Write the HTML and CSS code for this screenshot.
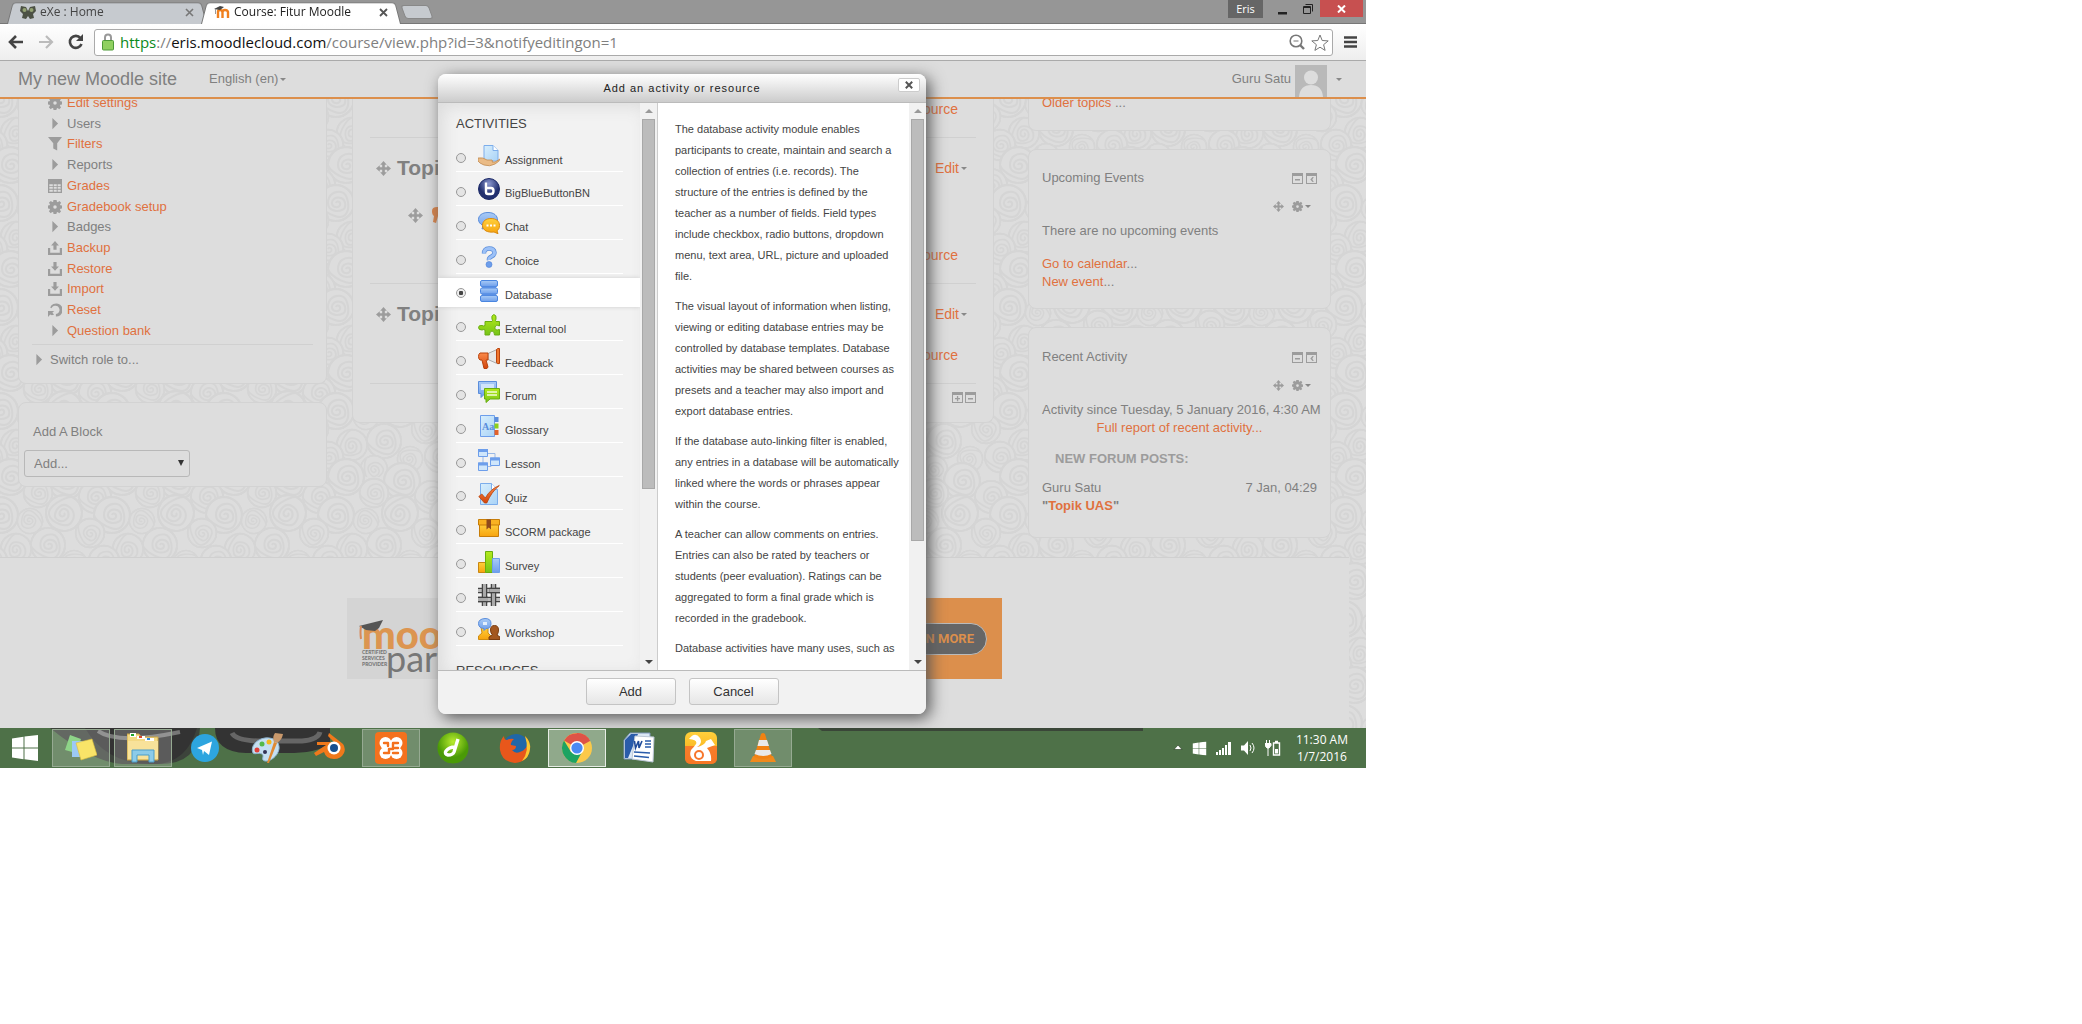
FILE: index.html
```html
<!DOCTYPE html>
<html lang="en">
<head>
<meta charset="utf-8">
<title>Course: Fitur Moodle</title>
<link rel="stylesheet" href="styles.css">
</head>
<body>
<svg class="defs" width="0" height="0" aria-hidden="true">
  <defs>
    <symbol id="i-move" viewBox="0 0 16 16"><path d="M8 0l3.500 4H9.400v2.600H12V4.500L16 8l-4 3.500V9.400H9.400V12h2.100L8 16l-3.500-4h2.100V9.400H4v2.100L0 8l4-3.500v2.100h2.600V4H4.500z"/></symbol>
    <symbol id="i-gear" viewBox="0 0 16 16"><path fill-rule="evenodd" d="M6.200 0h3.600l.4 2.100 1 .4L13 1.100 15 3.200l-1.300 1.800.4 1.100 1.900.3v3.300l-1.900.3-.5 1.100L14.900 13l-2.100 2-1.700-1.300-1.100.5-.4 1.800H6.300l-.3-1.900-1.200-.5L3.100 15 1 12.900l1.300-1.700-.5-1.200-1.800-.4V6.400l1.800-.3.500-1.200L1 3.200 3.200 1l1.700 1.300 1-.4zM8 6a2 2 0 100 4 2 2 0 000-4z"/></symbol>
    <symbol id="i-arrow" viewBox="0 0 16 16"><path d="M5 1l6.500 6.500L5 14z"/></symbol>
    <symbol id="i-filter" viewBox="0 0 16 16"><path d="M0 0h16l-5.500 7v8.500L6 13V7z"/></symbol>
    <symbol id="i-grid" viewBox="0 0 16 16"><path fill-rule="evenodd" d="M0 0h16v16H0zM1.500 6v2.200h4V6zM6.500 6v2.200H10V6zM11 6v2.200h3.500V6zM1.500 9.200v2h4v-2zM6.500 9.200v2H10v-2zM11 9.200v2h3.500v-2zM1.500 12.200v2.300h4v-2.300zM6.500 12.200v2.300H10v-2.300zM11 12.200v2.300h3.500v-2.300z"/></symbol>
    <symbol id="i-up" viewBox="0 0 16 16"><path d="M8 0l4.500 5H9.800v5H6.200V5H3.500zM0 8h2.500v5.500h11V8H16v8H0z"/></symbol>
    <symbol id="i-down" viewBox="0 0 16 16"><path d="M8 10L3.500 5h2.700V0h3.600v5h2.700zM0 8h2.500v5.500h11V8H16v8H0z"/></symbol>
    <symbol id="i-reset" viewBox="0 0 16 16"><path d="M2.500 5A7.500 7.500 0 119 15.500v-2.800A4.800 4.800 0 104 6zM0 9h7l-2 2 2 2-2.500 1-2-1L0 16z"/></symbol>
    <symbol id="i-minus" viewBox="0 0 11 11"><path fill-rule="evenodd" d="M0 0h11v11H0zM1 3v7h9V3zM3 6h5v1.500H3z"/></symbol>
    <symbol id="i-plus" viewBox="0 0 11 11"><path fill-rule="evenodd" d="M0 0h11v11H0zM1 3v7h9V3z"/><path d="M3 6h5v1.300H3zM4.900 4h1.300v5.200H4.900z"/></symbol>
    <symbol id="i-dock" viewBox="0 0 11 11"><path fill-rule="evenodd" d="M0 0h11v11H0zM1 3v7h9V3z"/><path d="M6.500 4h1.300L6.300 6.500l1.500 2.600H6.500L4.300 6.500z"/></symbol>
    <symbol id="i-win" viewBox="0 0 26 26"><path d="M0 3.500l11.500-1.700V12.500H0zM12.500 1.600L26 0v12.500H12.500zM0 13.500h11.500v10.700L0 22.500zM12.500 13.500H26V26l-13.500-1.700z"/></symbol>
    <linearGradient id="g-blue" x2="0" y2="1"><stop offset="0" stop-color="#a9cbf6"/><stop offset="1" stop-color="#6d9eeb"/></linearGradient>
    <linearGradient id="g-page" x2="1" y2="1"><stop offset="0" stop-color="#d8eefc"/><stop offset="1" stop-color="#a9d3f7"/></linearGradient>
    <linearGradient id="g-yel" x2="0" y2="1"><stop offset="0" stop-color="#ffd03c"/><stop offset="1" stop-color="#f7a30e"/></linearGradient>
    <linearGradient id="g-grn" x2="0" y2="1"><stop offset="0" stop-color="#b4ea1c"/><stop offset="1" stop-color="#76c417"/></linearGradient>
    <linearGradient id="g-org" x2="0" y2="1"><stop offset="0" stop-color="#fb8a4a"/><stop offset="1" stop-color="#d2440b"/></linearGradient>
    <radialGradient id="g-bbb" cy=".25"><stop offset="0" stop-color="#8b98d0"/><stop offset="1" stop-color="#22306f"/></radialGradient>
    <radialGradient id="g-lime" cy=".3"><stop offset="0" stop-color="#b8ec2f"/><stop offset="1" stop-color="#4a9a06"/></radialGradient>
    <g id="swirl"><circle r="18" fill="#ddd"/><path d="M0 0c1-3 5-1 4 2s-7 3-8-1 4-8 9-6 6 10 1 12-14 1-14-7S-2-12 5-11 15 6 9 12-14 8-18 1" /><circle r="18"/></g>
    <pattern id="swirls" width="112" height="104" patternUnits="userSpaceOnUse">
      <g fill="none" stroke="#d5d5d5" stroke-width="2">
        <use href="#swirl" x="10" y="0"/><use href="#swirl" x="66" y="4"/><use href="#swirl" x="122" y="0"/>
        <use href="#swirl" transform="translate(38 16) scale(.8)"/><use href="#swirl" transform="translate(95 20) scale(.9)"/>
        <use href="#swirl" transform="translate(0 38)"/><use href="#swirl" transform="translate(112 38)"/>
        <use href="#swirl" transform="translate(64 36) rotate(120)"/><use href="#swirl" transform="translate(30 44) scale(.7) rotate(200)"/>
        <use href="#swirl" transform="translate(90 56) scale(.8) rotate(40)"/><use href="#swirl" transform="translate(48 68) scale(.95)"/>
        <use href="#swirl" transform="translate(16 72) scale(.85) rotate(90)"/><use href="#swirl" transform="translate(74 86) scale(.7) rotate(150)"/>
        <use href="#swirl" transform="translate(104 84) scale(.85)"/><use href="#swirl" transform="translate(-8 84) scale(.85)"/>
        <use href="#swirl" transform="translate(38 96) scale(.75) rotate(60)"/><use href="#swirl" x="10" y="104"/><use href="#swirl" x="66" y="108"/><use href="#swirl" x="122" y="104"/>
      </g>
    </pattern>
  </defs>
</svg>

<div class="desktop">
  <header class="browser">
    <div class="tabstrip">
      <div class="tab">
        <svg width="16" height="16" viewBox="0 0 16 16"><path d="M1 2l5 1 2 4 2-4 5-1 1 5-3 3 1 4-4 1-2-3-2 3-4-1 1-4-3-3z" fill="#4c5144"/><circle cx="4.500" cy="6" r="2" fill="#93a273"/><circle cx="11.500" cy="6" r="2" fill="#93a273"/></svg>
        <span class="tab-name">eXe : Home</span>
        <button class="tab-close" aria-label="Close tab"><svg width="9" height="9" viewBox="0 0 9 9"><path d="M1 1l7 7M8 1L1 8" stroke="#777" stroke-width="1.600"/></svg></button>
      </div>
      <div class="tab tab-on">
        <svg width="16" height="16" viewBox="0 0 16 16"><path d="M4 14V8q0-2 2-2t2.500 2v6M8.500 8q0-2 2.500-2t3 2v6" fill="none" stroke="#f0801e" stroke-width="2.400"/><path d="M0 5l6-3 4 1-4 3z" fill="#444"/><path d="M1.500 5v5" stroke="#999"/></svg>
        <span class="tab-name">Course: Fitur Moodle</span>
        <button class="tab-close" aria-label="Close tab"><svg width="9" height="9" viewBox="0 0 9 9"><path d="M1 1l7 7M8 1L1 8" stroke="#555" stroke-width="1.800"/></svg></button>
      </div>
      <button class="tab-new" aria-label="New tab"></button>
      <div class="window-controls">
        <button class="win-user">Eris</button>
        <button class="win-btn" aria-label="Minimize"><svg width="10" height="12" viewBox="0 0 10 12"><path d="M0 9h9v2.500H0z" fill="#222"/></svg></button>
        <button class="win-btn" aria-label="Restore"><svg width="10" height="10" viewBox="0 0 10 10"><path d="M.5 2.500h7v7h-7zM.5 3.500h7M2.500.5h7v7" fill="none" stroke="#222"/></svg></button>
        <button class="win-btn win-close" aria-label="Close"><svg width="9" height="8" viewBox="0 0 9 8"><path d="M1 .5l7 7M8 .5l-7 7" stroke="#fff" stroke-width="2"/></svg></button>
      </div>
    </div>
    <div class="toolbar">
      <button class="tool" aria-label="Back"><svg width="16" height="14" viewBox="0 0 16 14"><path d="M8 1L2 7l6 6M2 7h13" fill="none" stroke="#444" stroke-width="2.600"/></svg></button>
      <button class="tool" aria-label="Forward"><svg width="16" height="14" viewBox="0 0 16 14"><path d="M8 1l6 6-6 6M14 7H1" fill="none" stroke="#bbb" stroke-width="2.200"/></svg></button>
      <button class="tool" aria-label="Reload"><svg width="16" height="16" viewBox="0 0 16 16"><path d="M12.500 4A6 6 0 1013.500 10" fill="none" stroke="#444" stroke-width="2.600"/><path d="M15 0v7H8z" fill="#444"/></svg></button>
      <div class="omnibox">
        <svg width="12" height="18" viewBox="0 0 12 18"><path d="M3 8V4.500a3 3 0 016 0V8" fill="none" stroke="#999" stroke-width="2"/><rect x=".5" y="7.500" width="11" height="9.500" rx="1" fill="#8fd060" stroke="#4d9a38"/></svg>
        <div class="url" role="textbox" contenteditable="true" spellcheck="false" aria-label="Address"><span class="url-scheme">https</span>://<span class="url-host">eris.moodlecloud.com</span>/course/view.php?id=3&amp;notifyeditingon=1</div>
        <button class="tool-sm" aria-label="Zoom"><svg width="16" height="16" viewBox="0 0 16 16"><circle cx="7" cy="7" r="5.800" fill="none" stroke="#777" stroke-width="1.600"/><path d="M4.500 7h5" stroke="#777"/><path d="M11 11l4 4" stroke="#777" stroke-width="2.400"/></svg></button>
        <button class="tool-sm" aria-label="Bookmark"><svg width="18" height="17" viewBox="0 0 18 17"><path d="M9 1l2.200 5.500 6 .4-4.600 3.800 1.500 5.700L9 13.200l-5.100 3.200 1.500-5.700L.8 6.900l6-.4z" fill="#fff" stroke="#777"/></svg></button>
      </div>
      <button class="menu" aria-label="Menu"><svg width="13" height="12" viewBox="0 0 13 12"><path d="M0 1.500h13M0 6h13M0 10.500h13" stroke="#444" stroke-width="2.600"/></svg></button>
    </div>
  </header>

  <div class="page">
    <svg class="wallpaper" width="100%" height="100%" aria-hidden="true"><rect width="100%" height="100%" fill="url(#swirls)"/></svg>
    <nav class="navbar">
      <a class="brand" href="#">My new Moodle site</a>
      <a class="lang caret" href="#">English (en)</a>
      <a class="user" href="#">Guru Satu</a>
      <svg class="avatar" width="32" height="32" viewBox="0 0 32 32"><rect width="32" height="32" fill="#b9b9b9"/><circle cx="16" cy="12.500" r="7" fill="#ddd"/><path d="M4 32q1-12 12-12t12 12z" fill="#ddd"/></svg>
      <button class="user-menu caret" aria-label="User menu"></button>
    </nav>

    <div class="columns">
      <aside class="side">
        <section class="block block-cut settings">
          <ul class="tree">
            <li><svg class="ico"><use href="#i-gear"/></svg><a href="#">Edit settings</a></li>
            <li><svg class="ico"><use href="#i-arrow"/></svg>Users</li>
            <li><svg class="ico"><use href="#i-filter"/></svg><a href="#">Filters</a></li>
            <li><svg class="ico"><use href="#i-arrow"/></svg>Reports</li>
            <li><svg class="ico"><use href="#i-grid"/></svg><a href="#">Grades</a></li>
            <li><svg class="ico"><use href="#i-gear"/></svg><a href="#">Gradebook setup</a></li>
            <li><svg class="ico"><use href="#i-arrow"/></svg>Badges</li>
            <li><svg class="ico"><use href="#i-up"/></svg><a href="#">Backup</a></li>
            <li><svg class="ico"><use href="#i-down"/></svg><a href="#">Restore</a></li>
            <li><svg class="ico"><use href="#i-down"/></svg><a href="#">Import</a></li>
            <li><svg class="ico"><use href="#i-reset"/></svg><a href="#">Reset</a></li>
            <li><svg class="ico"><use href="#i-arrow"/></svg><a href="#">Question bank</a></li>
          </ul>
          <p class="role"><svg class="ico"><use href="#i-arrow"/></svg>Switch role to...</p>
        </section>
        <section class="block add-block">
          <h2><label for="add-block">Add A Block</label></h2>
          <div class="picker"><select id="add-block"><option>Add...</option></select></div>
        </section>
      </aside>

      <main class="block block-cut course">
        <section class="topic topic-first"><p class="add-res"><a href="#">Add an activity or resource</a></p></section>
        <section class="topic topic-tall">
          <div class="topic-head"><svg class="ico"><use href="#i-move"/></svg><h3>Topic 9</h3><a class="caret edit" href="#">Edit</a></div>
          <div class="topic-item"><svg class="ico"><use href="#i-move"/></svg><svg class="pin" viewBox="0 0 16 18"><path d="M1 5q0-4 5-4h6v9H7l-2 7-3-1 1-6q-2-1-2-5z" fill="#d8834a"/></svg></div>
          <p class="add-res"><a href="#">Add an activity or resource</a></p>
        </section>
        <section class="topic">
          <div class="topic-head"><svg class="ico"><use href="#i-move"/></svg><h3>Topic 10</h3><a class="caret edit" href="#">Edit</a></div>
          <p class="add-res"><a href="#">Add an activity or resource</a></p>
        </section>
        <div class="counts"><svg class="ico-sm"><use href="#i-plus"/></svg><svg class="ico-sm"><use href="#i-minus"/></svg></div>
      </main>

      <aside class="side">
        <section class="block block-cut older"><a href="#">Older topics</a> ...</section>
        <section class="block info">
          <div class="info-head"><h2>Upcoming Events</h2><svg class="ico-sm"><use href="#i-minus"/></svg><svg class="ico-sm"><use href="#i-dock"/></svg></div>
          <div class="info-tools"><svg class="ico-sm"><use href="#i-move"/></svg><span class="caret"><svg class="ico-sm"><use href="#i-gear"/></svg></span></div>
          <p class="none">There are no upcoming events</p>
          <p><a href="#">Go to calendar</a>...</p>
          <p><a href="#">New event</a>...</p>
        </section>
        <section class="block info recent">
          <div class="info-head"><h2>Recent Activity</h2><svg class="ico-sm"><use href="#i-minus"/></svg><svg class="ico-sm"><use href="#i-dock"/></svg></div>
          <div class="info-tools"><svg class="ico-sm"><use href="#i-move"/></svg><span class="caret"><svg class="ico-sm"><use href="#i-gear"/></svg></span></div>
          <p class="center">Activity since Tuesday, 5 January 2016, 4:30 AM</p>
          <p class="center"><a href="#">Full report of recent activity...</a></p>
          <h3>NEW FORUM POSTS:</h3>
          <p class="post"><span>Guru Satu</span><span>7 Jan, 04:29</span></p>
          <p><b>"<a href="#">Topik UAS</a>"</b></p>
        </section>
      </aside>
    </div>

    <footer class="footer">
      <div class="banner">
        <svg class="cap" viewBox="0 0 24 20"><path d="M0 6l24-6-4 8-4 3-9-1z" fill="#555"/><path d="M2 6q-1 6 0 13" fill="none" stroke="#d88a5a" stroke-width="2"/></svg>
        <div class="logo"><span class="logo-top">moodle</span><span class="logo-tag">CERTIFIED SERVICES PROVIDER</span><span class="logo-low">partner</span></div>
        <a class="learn" href="#">LEARN MORE</a>
      </div>
    </footer>

    <form class="dialog" role="dialog" aria-labelledby="dlg-title">
      <div class="dialog-head"><h1 id="dlg-title">Add an activity or resource</h1><button type="button" class="dialog-close" aria-label="Close"><svg width="8" height="8" viewBox="0 0 8 8"><path d="M.8.8l6.400 6.400M7.200.8L.8 7.200" stroke="#555" stroke-width="2"/></svg></button></div>
      <div class="dialog-body">
        <div class="chooser">
          <h2>ACTIVITIES</h2>
          <ul class="options">
            <li><label><input type="radio" name="mod"><svg viewBox="0 0 22 22"><path d="M6 .5h9l5 5V16H6z" fill="url(#g-page)" stroke="#7cadeb"/><path d="M15 .5v5h5" fill="#fff" stroke="#7cadeb"/><path d="M0 13q5-1 9 2l5 0q1 1 0 2h3l5-3q0 2-5 5-5 3-11 1-5-2-6-4z" fill="#eabb86" stroke="#c08a50" stroke-width=".8"/></svg>Assignment</label></li>
            <li><label><input type="radio" name="mod"><svg viewBox="0 0 22 22"><circle cx="11" cy="11" r="10.500" fill="url(#g-bbb)" stroke="#1c2a68"/><path d="M8 4.500V14q0 2 2 2h3q2.500 0 2.500-3t-2.500-3H8" fill="none" stroke="#fff" stroke-width="2.400"/></svg>BigBlueButtonBN</label></li>
            <li><label><input type="radio" name="mod"><svg viewBox="0 0 22 22"><path d="M10 .5c6 0 9.500 3 9.500 7.500S16 15 10 15l-6 2 1-3.500C2 12 .5 10 .5 7.500.5 3.500 4 .5 10 .5z" fill="url(#g-blue)" stroke="#5a8ddb"/><path d="M13 6.500c5 0 8.500 2.500 8.500 7 0 3-1 4-2.500 5.200l1 3-4-1.700c-6 .8-11.500-1.500-11.500-6.500 0-4.500 3.500-7 8.500-7z" fill="url(#g-yel)" stroke="#d98a10"/><path d="M8.500 12.500h2v2h-2zM12 12.500h2v2h-2zM15.500 12.500h2v2h-2z" fill="#fff"/></svg>Chat</label></li>
            <li><label><input type="radio" name="mod"><svg viewBox="0 0 22 22"><path d="M6 7.500q0-5 5-5t5.500 4q0 2.500-3 4t-2.500 3.500" fill="none" stroke="#5a8ddb" stroke-width="4.400"/><path d="M6 7.500q0-5 5-5t5.500 4q0 2.500-3 4t-2.500 3.500" fill="none" stroke="#9cc1f7" stroke-width="3"/><circle cx="11" cy="18.500" r="3" fill="#6d9eeb" stroke="#4d82d6" stroke-width=".6"/></svg>Choice</label></li>
            <li class="on"><label><input type="radio" name="mod" checked><svg viewBox="0 0 22 22"><g fill="url(#g-blue)" stroke="#4a86e0"><rect x="2.500" y=".5" width="17" height="6" rx="1.500"/><rect x="2.500" y="8" width="17" height="6" rx="1.500"/><rect x="2.500" y="15.500" width="17" height="6" rx="1.500"/></g><path d="M4 6.500h14v1.500H4zM4 14h14v1.500H4z" fill="#5b90e4"/></svg>Database</label></li>
            <li><label><input type="radio" name="mod"><svg viewBox="0 0 22 22"><path d="M7 7.500h7q1-1 0-2.500-1-3.500 1.800-4.500 3 .5 2.200 4.500-1 1.500 0 2.500h3.500v4.500q-4-2-4.500 1.500t4.500 2v5.500h-5q0-4-2.500-4t-2.500 4H7v-5q-1-1-3 0-3.500 0-3.500-2.500T4 11.500q2 1 3 0z" fill="url(#g-grn)" stroke="#69ad10"/></svg>External tool</label></li>
            <li><label><input type="radio" name="mod"><svg viewBox="0 0 22 22"><path d="M10 5.500l9-4v14l-9-4z" fill="#e6e6e6" stroke="#aaa"/><path d="M2 5h8v7H8l2 7-1 1.500H6L4 12H2Q.5 11 .5 8.500T2 5z" fill="url(#g-org)" stroke="#b8420c"/><path d="M18.500 1.500q1-1.500 3-1v15q-2 .8-3-1z" fill="#f0762e" stroke="#b8420c"/></svg>Feedback</label></li>
            <li><label><input type="radio" name="mod"><svg viewBox="0 0 22 22"><path d="M.5.500h18v12H7l-4 4v-4H.5z" fill="url(#g-blue)" stroke="#5a8ddb"/><path d="M3 3h13v6H3z" fill="#cfe4fb"/><path d="M6.500 7.500h15v10.500H12l-4 3.500V18H6.500z" fill="url(#g-grn)" stroke="#69ad10"/><path d="M9 11h10M9 14h10" stroke="#f2fbd8" stroke-width="1.500"/></svg>Forum</label></li>
            <li><label><input type="radio" name="mod"><svg viewBox="0 0 22 22"><path d="M2.500.5h14v21h-14z" fill="url(#g-page)" stroke="#6d9eeb"/><path d="M16.500 2h4v5h-4z" fill="#5a8ddb"/><path d="M16.500 8.500h4v5h-4z" fill="#8dcf18"/><path d="M16.500 15h4v5h-4z" fill="#e2622a"/><text x="4" y="14.500" font-family="Liberation Serif, serif" font-size="10" font-weight="bold" fill="#5a8ddb">Aa</text></svg>Glossary</label></li>
            <li><label><input type="radio" name="mod"><svg viewBox="0 0 22 22"><path d="M9 4.500h8V9M5 8v6M9 17.500h4V14" fill="none" stroke="#9ab9e6"/><g fill="#cfe6fb" stroke="#6d9eeb"><path d="M.5.500h9v7h-9zM.5 14h9v7.500h-9zM12.500 9h9v7.500h-9z"/></g><path d="M0 0h10v3H0zM0 13.500h10v3H0zM12 8.500h10v3H12z" fill="#6d9eeb"/></svg>Lesson</label></li>
            <li><label><input type="radio" name="mod"><svg viewBox="0 0 22 22"><path d="M2.500.5h11l6 6v15h-17z" fill="url(#g-page)" stroke="#7cadeb"/><path d="M13.500.5v6h6" fill="#fff" stroke="#7cadeb"/><path d="M.8 13.500l3-2.500 3.500 4q5-9 14-12.500-8 6.500-12.500 17.500H6.500z" fill="url(#g-org)" stroke="#b8420c" stroke-width=".8"/></svg>Quiz</label></li>
            <li><label><input type="radio" name="mod"><svg viewBox="0 0 22 22"><path d="M1.500 7h19v12.500h-19z" fill="url(#g-yel)" stroke="#c77d08"/><path d="M.5 2.500h21V8H.5z" fill="#f9b222" stroke="#c77d08"/><path d="M8.500 2.500h4.500v10l-2.200-2-2.300 2z" fill="#8e4a1c"/></svg>SCORM package</label></li>
            <li><label><input type="radio" name="mod"><svg viewBox="0 0 22 22"><path d="M.5 11.500h7v10h-7z" fill="url(#g-yel)" stroke="#c98610"/><path d="M7.500.5h7v21h-7z" fill="url(#g-grn)" stroke="#69ad10"/><path d="M14.500 7.500h7v14h-7z" fill="url(#g-blue)" stroke="#6d9eeb"/></svg>Survey</label></li>
            <li><label><input type="radio" name="mod"><svg viewBox="0 0 22 22"><path d="M0 6.500h22M0 15.500h22" stroke="#444" stroke-width="5.500"/><path d="M0 6.500h22M0 15.500h22" stroke="#bbb" stroke-width="3"/><path d="M6.500 0v22M15.500 0v22" stroke="#444" stroke-width="5.500"/><path d="M6.500 0v22M15.500 0v22" stroke="#aaa" stroke-width="3"/><path d="M11.500 6.500H22M0 15.500h10" stroke="#444" stroke-width="5.500"/><path d="M11.500 6.500H22M0 15.500h10" stroke="#aaa" stroke-width="2.800"/></svg>Wiki</label></li>
            <li><label><input type="radio" name="mod"><svg viewBox="0 0 22 22"><path d="M3 9h7v6l3 3v3.500H.5V18L4 15z" fill="url(#g-yel)" stroke="#d08c10"/><path d="M11 21.500V19l3.500-2q-2-2-2-5 0-4.500 4-4.500t4 4.500q0 3-1.500 5l3 2v2.500z" fill="#a3571f" stroke="#7b3d10"/><path d="M7 .5q6 0 6 5t-5 5l-2 2v-2Q.5 10 .5 5.500T7 .5z" fill="url(#g-blue)" stroke="#5a8ddb"/><path d="M5 4h4v3H5z" fill="#e4f0fd"/></svg>Workshop</label></li>
          </ul>
          <h2 class="next">RESOURCES</h2>
        </div>
        <div class="scroll scroll-left" aria-hidden="true"><i class="up"></i><b class="thumb"></b><i class="down"></i></div>
        <div class="help">
          <p>The database activity module enables participants to create, maintain and search a collection of entries (i.e. records). The structure of the entries is defined by the teacher as a number of fields. Field types include checkbox, radio buttons, dropdown menu, text area, URL, picture and uploaded file.</p>
          <p>The visual layout of information when listing, viewing or editing database entries may be controlled by database templates. Database activities may be shared between courses as presets and a teacher may also import and export database entries.</p>
          <p>If the database auto-linking filter is enabled, any entries in a database will be automatically linked where the words or phrases appear within the course.</p>
          <p>A teacher can allow comments on entries. Entries can also be rated by teachers or students (peer evaluation). Ratings can be aggregated to form a final grade which is recorded in the gradebook.</p>
          <p>Database activities have many uses, such as</p>
        </div>
        <div class="scroll scroll-right" aria-hidden="true"><i class="up"></i><b class="thumb"></b><i class="down"></i></div>
      </div>
      <div class="dialog-foot"><button type="button">Add</button><button type="button">Cancel</button></div>
    </form>
  </div>

  <div class="taskbar">
    <svg class="tyres" aria-hidden="true"><path d="M50 0h150q-2 36-40 36h-38Q92 34 50 0z" fill="#3c433b"/><path d="M85 0h112q-10 34-40 36-50 2-72-36z" fill="#333"/><path d="M98 3q20 14 82 1" fill="none" stroke="#777" stroke-width="4"/><path d="M215 0h115v14q-8 10-36 11h-48Q215 24 215 0z" fill="#333"/><path d="M232 5q4 8 30 8h40q16-1 18-9" fill="none" stroke="#666" stroke-width="5"/><path d="M818 0h325v3H822z" fill="#3a4638"/></svg>
    <button class="start" aria-label="Start"><svg width="26" height="26"><use href="#i-win" fill="#fff"/></svg></button>
    <div class="apps">
      <button class="app open" aria-label="Sticky Notes"><svg viewBox="0 0 32 32"><path d="M5 3l11 4-5 14-11-3z" fill="#8ed488"/><path d="M7 9h16v16H7z" fill="#9cc9f5"/><path d="M11 11l16-4 5 16-16 5z" fill="#f9e468" stroke="#d8bc3c" stroke-width=".6"/></svg></button>
      <button class="app open" aria-label="File Explorer"><svg viewBox="0 0 32 32"><path d="M0 2h12l2 3h17v23H0z" fill="#f4d983" stroke="#c9a548"/><path d="M3 1h6v4H3z" fill="#fff"/><path d="M4 2h3v2H4z" fill="#1fa52c"/><path d="M10 4h8v3h-8z" fill="#fff"/><path d="M12 4h3v2h-3z" fill="#d9482b"/><path d="M18 6h9v3h-9z" fill="#fff"/><path d="M20 6h3v2h-3z" fill="#2a86d9"/><path d="M1 9h30v18H1z" fill="#f8e29a"/><path d="M5 30V18h22v12h-5v-7H10v7z" fill="#8ccbe8" stroke="#4b9dc9"/></svg></button>
      <button class="app" aria-label="Telegram"><svg viewBox="0 0 32 32"><circle cx="16" cy="16" r="14" fill="#2da5df"/><path d="M8 16l15-6.500L20 23l-5-4-1 4-1-5z" fill="#fff"/></svg></button>
      <button class="app" aria-label="Paint"><svg viewBox="0 0 32 32"><path d="M14 6c9-1 15 4 14 11S19 30 14 29s0-5-3-7-7 1-9-1C-1 14 6 7 14 6z" fill="#c5dff1" stroke="#8db4d0"/><circle cx="6" cy="18" r="2.500" fill="#e0403a"/><circle cx="11" cy="12" r="2.500" fill="#54b948"/><circle cx="18" cy="10" r="2.500" fill="#f5b71c"/><circle cx="14" cy="20" r="2" fill="#335"/><path d="M16 31l7-21 3 1-8 20z" fill="#e08a33"/><path d="M23 10q-2-5 1-9l8 1q-1 6-6 9z" fill="#c9996c"/></svg></button>
      <button class="app" aria-label="Blender"><svg viewBox="0 0 32 32"><path d="M16 1l14 11q3 4 1 9-3 6-10 6-8 0-10-7l-8 4-2-3 12-8H4v-3h17l-6-6z" fill="#f0791b"/><circle cx="21" cy="16" r="6.500" fill="#fff"/><circle cx="21" cy="16" r="4" fill="#17508f"/></svg></button>
      <button class="app open" aria-label="XAMPP"><svg viewBox="0 0 32 32"><rect width="32" height="32" rx="4" fill="#f4711d"/><g fill="#fff"><circle cx="10.500" cy="11" r="6"/><circle cx="21.500" cy="11" r="6"/><circle cx="10.500" cy="21" r="6"/><circle cx="21.500" cy="21" r="6"/><path d="M9 10h14v12H9z"/></g><path d="M9 11h4v3M9 21h5v-4h4v-6h5M18 21h5M20 16h3" fill="none" stroke="#f4711d" stroke-width="2.400" stroke-linecap="round" stroke-linejoin="round"/></svg></button>
      <button class="app" aria-label="Dreamweaver"><svg viewBox="0 0 32 32"><circle cx="16" cy="16" r="15.500" fill="url(#g-lime)"/><path d="M21 7l-4 13q-1 3-6 3-4-1-2-4 3-4 9-4" fill="none" stroke="#fff" stroke-width="3.400" stroke-linejoin="round"/></svg></button>
      <button class="app" aria-label="Firefox"><svg viewBox="0 0 32 32"><circle cx="17" cy="15" r="13" fill="#2067a8"/><path d="M26 4q6 6 5 13-2 13-15 14Q3 30 1 18 0 9 5 4q0 4 3 4 3-2 7-1-4 3-3 6l5 1q0 4-4 4 3 4 8 2 9-3 7-12z" fill="#e8571b"/><path d="M26 4q6 6 5 13-1 9-8 12 8-10 3-25z" fill="#f9c832"/></svg></button>
      <button class="app current" aria-label="Chrome"><svg viewBox="0 0 32 32"><circle cx="16" cy="16" r="15" fill="#fbc94a"/><path d="M16 16L3 8.500A15 15 0 0129 9z" fill="#de5347"/><path d="M16 1a15 15 0 0113.200 8H16z" fill="#de5347"/><path d="M3 8.500A15 15 0 0015 31l6.500-12L10 20z" fill="#1da362"/><circle cx="16" cy="16" r="7" fill="#fff"/><circle cx="16" cy="16" r="5.600" fill="#4a8af4"/></svg></button>
      <button class="app" aria-label="Word"><svg viewBox="0 0 32 32"><path d="M1 8l6-7h20v26H1z" fill="#dce8f5" stroke="#7f98bb"/><path d="M2 8l6-6h7L5 26H2z" fill="#2a5caa"/><path d="M12 4l19 1-1 25-21-3z" fill="#fff" stroke="#bcc7d6"/><path d="M11.500 9l1 7 3-7 .5 7 3-7" fill="none" stroke="#1f4b99" stroke-width="1.600"/><path d="M22 9h6M22 12h6M22 15h6M11 20l16 1M11 24l15 1.500" stroke="#2a5caa" stroke-width="1.600"/></svg></button>
      <button class="app" aria-label="UC Browser"><svg viewBox="0 0 32 32"><rect width="32" height="32" rx="6" fill="url(#g-yel)"/><path d="M0 14h32v12q0 6-6 6H6q-6 0-6-6z" fill="#f7682c" opacity=".75"/><path d="M4 7q6-8 11-1 3 5-3 9 8-2 9-6l5-2 4 6-8 3q5 6 4 13H11q-8-3-5-11 3-3 5-6 2-4-7-5z" fill="#fff"/><circle cx="14" cy="23" r="4" fill="none" stroke="#f7762c" stroke-width="2"/></svg></button>
      <button class="app open" aria-label="VLC"><svg viewBox="0 0 32 32"><path d="M6 24h20l3 6H3z" fill="#f08a1c"/><path d="M14 2q2-2 4 0l7 23q-9 4-18 0z" fill="#f18213"/><path d="M12 8h8l2 6H10.500zM9 18h14l1.500 4q-8 4-17 0z" fill="#e9e9e9"/></svg></button>
    </div>
    <div class="tray">
      <svg width="10" height="8" viewBox="0 0 10 8"><path d="M5 1l4 4.500H1z" fill="#fff" stroke="#23351f" stroke-width=".6"/></svg>
      <svg width="15" height="15" viewBox="-1 -1 28 28"><use href="#i-win" width="26" height="26" fill="#fff"/></svg>
      <svg width="16" height="14" viewBox="0 0 16 14"><path d="M0 11h2v3H0zM3 9h2v5H3zM6 7h2v7H6zM9 4h2v10H9zM12 1h3v13h-3z" fill="#fff"/></svg>
      <svg width="15" height="14" viewBox="0 0 15 14"><path d="M0 4.500h3L7 0v14L3 9.500H0z" fill="#fff"/><path d="M9 4q2 3 0 6M11 2q4 5 0 10" fill="none" stroke="#fff"/></svg>
      <svg width="16" height="16" viewBox="0 0 16 16"><path d="M1.500 0v3M4.500 0v3M0 3.500h6v2L4 8H2L0 5.500zM3 8v8" fill="#fff" stroke="#fff"/><path d="M8.500 3h6v12h-6zM10 1.500h3" fill="none" stroke="#fff" stroke-width="1.400"/><path d="M10 9h3v4.500h-3z" fill="#fff"/></svg>
      <time class="clock"><span>11:30 AM</span><span>1/7/2016</span></time>
    </div>
  </div>
</div>
</body>
</html>
```
FILE: styles.css
```css
* { box-sizing: border-box; }
body {
  margin: 0;
  min-height: 100vh;
  display: grid;
  grid-template-columns: 1366fr 716fr;
  align-items: start;
  background: #fff;
  font: 13px/18px "Liberation Sans", Arial, sans-serif;
  color: #808080;
}
h1, h2, h3, p, ul { margin: 0; padding: 0; }
ul { list-style: none; }
button { font: inherit; padding: 0; border: 0; background: none; }
svg { flex: none; display: block; }
a { color: #e0713f; text-decoration: none; }
.defs { position: absolute; }

.desktop {
  min-height: 75vh;
  display: flex;
  flex-direction: column;
  overflow: hidden;
}

/* Browser chrome */
.browser { font-family: "Open Sans", "Noto Sans", sans-serif; }
.tabstrip {
  display: flex;
  height: 24px;
  padding-left: 10px;
  background: #969696;
  border-bottom: 1px solid #777;
}
.tab {
  position: relative;
  z-index: 0;
  display: flex;
  align-items: center;
  gap: 4px;
  width: 194px;
  height: 24px;
  padding: 0 10px;
  font-size: 12px;
  color: #444;
}
.tab::before {
  content: "";
  position: absolute;
  z-index: -1;
  inset: 1px -3px 0;
  background: #c6cacf;
  border: 1px solid #777;
  border-bottom: 0;
  border-radius: 4px 4px 0 0;
  transform: perspective(40px) rotateX(6deg);
  transform-origin: bottom;
}
.tab-on { color: #222; }
.tab-on::before { background: #fff; }
.tab-name { flex: 1; }
.tab-new {
  width: 28px;
  height: 14px;
  margin: 5px 5px;
  background: #c6cacf;
  border: 1px solid #888;
  border-radius: 3px;
  transform: skewX(20deg);
}
.window-controls { display: flex; align-items: flex-start; margin-left: auto; padding-right: 3px; }
.win-user { width: 35px; height: 18px; background: #666; color: #fff; font-size: 11px; margin-right: 7px; }
.win-btn { display: grid; place-items: center; width: 25px; height: 17px; }
.win-close { width: 43px; background: #c75050; }

.toolbar {
  display: flex;
  align-items: center;
  gap: 6px;
  height: 37px;
  padding: 0 9px 0 4px;
  background: linear-gradient(#fff, #eee);
  border-bottom: 1px solid #aaa;
}
.tool { display: grid; place-items: center; width: 24px; height: 24px; }
.tool-sm { display: grid; place-items: center; }
.menu { margin-left: 5px; }
.omnibox {
  flex: 1;
  display: flex;
  align-items: center;
  gap: 6px;
  height: 27px;
  padding: 0 3px 0 7px;
  background: #fff;
  border: 1px solid #aaa;
  border-radius: 3px;
}
.url { flex: 1; font-size: 15px; color: #808080; }
.url-scheme { color: #0b8a1c; }
.url-host { color: #111; }

/* Moodle page */
.page {
  position: relative;
  flex: 1;
  display: flex;
  flex-direction: column;
  overflow: hidden;
  background: #ddd;
}
.wallpaper { position: absolute; inset: 0; }
.navbar {
  position: relative;
  z-index: 1;
  display: flex;
  align-items: center;
  height: 38px;
  padding: 0 24px 0 18px;
  background: #ddd;
  border-bottom: 2px solid #dc8f4c;
}
.navbar a { color: #808080; }
.brand { font-size: 18px; margin-right: 32px; }
.user { margin-left: auto; margin-right: 4px; }
.avatar { margin-right: 7px; align-self: end; }
.caret { display: inline-flex; align-items: center; }
.caret::after {
  content: "";
  margin-left: 2px;
  border: 3px solid transparent;
  border-top-color: #888;
  border-bottom: 0;
}

.columns {
  position: relative;
  display: grid;
  grid-template-columns: minmax(0, 309fr) minmax(0, 651fr) minmax(0, 303fr);
  column-gap: 25px;
  align-items: start;
  margin-top: -7px;
  padding: 0 35px 19px 18px;
}
.side { display: grid; grid-template-columns: minmax(0, 1fr); gap: 18px; }
.block { background: #ddd; border: 1px solid #d3d3d3; border-radius: 8px; }
.block-cut { border-top: 0; border-radius: 0 0 8px 8px; }
.block h2 { font-size: 13px; line-height: 18px; font-weight: normal; }

.ico { width: 14px; height: 14px; fill: #9c9c9c; }
.ico-sm { width: 11px; height: 11px; fill: #9c9c9c; }

.settings { padding: 0 13px 14px; }
.tree {
  display: flex;
  flex-direction: column;
  justify-content: space-between;
  min-height: 253px;
  padding: 1px 0 3px 16px;
  border-bottom: 1px solid #d0d0d0;
}
.tree li { display: flex; align-items: center; gap: 5px; line-height: 20px; }
.role { display: flex; align-items: center; gap: 4px; padding-top: 6px; }
.add-block { padding: 20px 5px 9px; }
.add-block h2 { padding-left: 9px; margin-bottom: 9px; }
.picker { position: relative; width: 166px; }
.picker::after {
  content: "";
  position: absolute;
  top: 10px;
  right: 6px;
  border: 3px solid transparent;
  border-top: 6px solid #333;
  border-bottom: 0;
}
.picker select {
  display: block;
  appearance: none;
  width: 100%;
  height: 27px;
  padding: 0 9px;
  font: inherit;
  color: #808080;
  background: #ddd;
  border: 1px solid #b8b8b8;
  border-radius: 3px;
}

.course { margin-right: 9px; padding: 0 17px 19px; font-size: 14px; }
.course .ico { width: 15px; height: 15px; }
.topic { height: 100px; border-bottom: 1px solid #d0d0d0; }
.topic-first { height: 46px; }
.topic-tall { height: 146px; }
.topic-first .add-res { padding-top: 8px; }
.topic-head { display: flex; align-items: center; gap: 6px; height: 62px; padding: 0 9px 2px 6px; }
.topic-head h3 { flex: 1; font-size: 21px; }
.topic-item { display: flex; gap: 8px; padding-left: 38px; height: 30px; margin-bottom: 16px; align-items: center; }
.pin { width: 16px; height: 18px; }
.add-res { text-align: right; padding-right: 18px; }
.counts { display: flex; justify-content: flex-end; gap: 2px; padding-top: 8px; }

.older { padding: 2px 13px 18px; }
.info { padding: 19px 13px 17px; }
.info-head { display: flex; align-items: center; gap: 3px; }
.info-head h2 { flex: 1; }
.info-tools { display: flex; justify-content: flex-end; gap: 8px; padding: 14px 6px 10px; line-height: 11px; }
.none { margin-bottom: 15px; }
.info p { white-space: nowrap; }
.recent { padding: 20px 13px 22px; }
.center { text-align: center; }
.info h3 { font-size: 13px; line-height: 18px; color: #9c9c9c; padding: 13px 13px 11px; }
.post { display: flex; justify-content: space-between; }

.footer {
  position: relative;
  flex: 1;
  margin-right: 17px;
  padding-top: 40px;
  background: #ddd;
  border-top: 1px solid #d0d0d0;
}
.banner {
  position: relative;
  display: flex;
  align-items: center;
  justify-content: space-between;
  width: 655px;
  height: 81px;
  margin: 0 auto;
  padding: 0 15px;
  background: linear-gradient(90deg, #d4d4d4 60%, #dc8f4c 60%);
}
.cap { position: absolute; left: 12px; top: 22px; width: 24px; height: 20px; }
.logo { display: grid; grid-template-columns: 24px auto; padding-top: 8px; font-family: Lato, sans-serif; }
.logo-top { grid-column: 1 / 3; font-size: 40px; line-height: 30px; font-weight: 900; color: #dc9550; }
.logo-tag { font-size: 5px; line-height: 6px; font-weight: 900; color: #777; }
.logo-low { font-size: 36px; line-height: 18px; color: #777; }
.learn {
  padding: 5px 12px;
  font: bold 13px/20px Roboto, "Liberation Sans", sans-serif;
  color: #dc8f4c;
  background: #666;
  border: 1px solid #bbb;
  border-radius: 16px;
}

/* Activity chooser */
.dialog {
  position: absolute;
  z-index: 2;
  inset: 13px 2px 14px 0;
  width: 488px;
  margin: 0 auto;
  display: flex;
  flex-direction: column;
  overflow: hidden;
  color: #444;
  background: #f2f2f2;
  border-radius: 8px;
  box-shadow: 4px 4px 16px #555;
}
.dialog-head {
  display: flex;
  align-items: center;
  height: 29px;
  padding: 0 6px 0 28px;
  background: linear-gradient(#fff, #ccc);
  border-bottom: 1px solid #bbb;
}
.dialog-head h1 { flex: 1; font-size: 11px; font-weight: normal; text-align: center; letter-spacing: 1px; color: #222; }
.dialog-close { display: grid; place-items: center; width: 22px; height: 14px; margin-bottom: 6px; background: #fff; border: 1px solid #ccc; border-radius: 2px; }
.dialog-body { flex: 1; min-height: 0; display: flex; }
.chooser { width: 202px; overflow: hidden; background: #f2f2f2; box-shadow: inset 6px 4px 16px #ddd; }
.chooser h2 { font-size: 13px; line-height: 18px; font-weight: normal; padding: 12px 18px 10px; }
.chooser .next { padding-top: 16px; }
.options { display: flex; flex-direction: column; justify-content: space-between; height: 503px; }
.options li { padding: 0 17px 0 18px; height: 29px; }
.options label {
  display: flex;
  align-items: center;
  height: 29px;
  padding-top: 5px;
  font-size: 11px;
  border-bottom: 1px solid #fff;
}
.options .on label { border-bottom-color: transparent; }
.options svg { width: 22px; height: 22px; margin: 0 5px 8px 12px; }
.options input {
  appearance: none;
  width: 10px;
  height: 10px;
  margin: 0 0 3px;
  background: #e4e4e4;
  border: 1px solid #999;
  border-radius: 50%;
}
.options input:checked { background: radial-gradient(#444 35%, #eee 45%); }
.options .on { background: #fff; box-shadow: 0 0 4px #ccc; }
.scroll { display: flex; flex-direction: column; align-items: center; width: 17px; padding: 6px 2px; background: #f1f1f1; }
.scroll-left { width: 18px; border-right: 1px solid #ccc; }
.thumb { width: 13px; height: 370px; margin: 6px 0 auto; background: #bcbcbc; border: 1px solid #a8a8a8; }
.scroll-right .thumb { height: 422px; }
.up, .down { border: 4px solid transparent; }
.up { border-top: 0; border-bottom-color: #999; }
.down { border-bottom: 0; border-top-color: #444; }
.help { flex: 1; overflow: hidden; padding: 16px 6px 0 17px; background: #fff; font-size: 11px; line-height: 21px; }
.help p { margin-bottom: 9px; }
.dialog-foot { display: flex; justify-content: center; gap: 13px; height: 44px; padding: 7px 0; background: #f2f2f2; border-top: 1px solid #bbb; }
.dialog-foot button {
  width: 90px;
  height: 27px;
  color: #333;
  background: linear-gradient(#fff, #e6e6e6);
  border: 1px solid #c4c4c4;
  border-radius: 3px;
}

/* Taskbar */
.taskbar {
  position: relative;
  display: flex;
  align-items: center;
  height: 40px;
  padding-left: 12px;
  background: #4e7148;
  color: #fff;
  font-family: "Open Sans", "Noto Sans", sans-serif;
}
.tyres { position: absolute; inset: 0; width: 100%; height: 40px; }
.start, .apps, .tray { position: relative; }
.apps { display: flex; gap: 4px; margin-left: 14px; }
.app { display: grid; place-items: center; width: 58px; height: 38px; border: 1px solid transparent; }
.app svg { width: 32px; height: 32px; }
.open { background: rgba(255, 255, 255, 0.2); border-color: #96aa92; }
.current { background: #90a98b; border-color: #e6ece4; }
.tray { display: flex; align-items: center; gap: 9px; margin-left: auto; padding-right: 18px; }
.clock { display: grid; margin-left: 6px; font-size: 12px; line-height: 17px; text-align: center; }
```
